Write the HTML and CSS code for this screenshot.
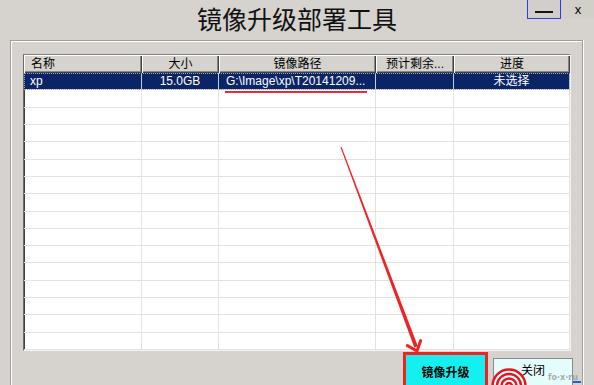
FILE: index.html
```html
<!DOCTYPE html>
<html lang="zh-CN">
<head>
  <meta charset="UTF-8">
  <meta name="viewport" content="width=device-width, initial-scale=1.0">
  <title>镜像升级部署工具</title>
  <link rel="stylesheet" href="styles.css">
</head>
<body>
  <div class="titlebar">
    <div></div>
    <h1 class="title">镜像升级部署工具</h1>
    <div class="win-controls">
      <div class="win-btn"><span class="min-bar"></span></div>
      <div class="win-btn close">x</div>
    </div>
  </div>

  <div class="group">
    <div class="listview">
      <div class="lv-head">
        <div class="hcell left">名称</div>
        <div class="hcell">大小</div>
        <div class="hcell">镜像路径</div>
        <div class="hcell">预计剩余...</div>
        <div class="hcell">进度</div>
      </div>
      <div class="lv-body">
        <div class="lv-row selected">
          <div class="cell left">xp</div>
          <div class="cell">15.0GB</div>
          <div class="cell path">G:\Image\xp\T20141209...</div>
          <div class="cell"></div>
          <div class="cell">未选择</div>
        </div>
        <div class="lv-row"><div class="cell"></div><div class="cell"></div><div class="cell"></div><div class="cell"></div><div class="cell"></div></div>
        <div class="lv-row"><div class="cell"></div><div class="cell"></div><div class="cell"></div><div class="cell"></div><div class="cell"></div></div>
        <div class="lv-row"><div class="cell"></div><div class="cell"></div><div class="cell"></div><div class="cell"></div><div class="cell"></div></div>
        <div class="lv-row"><div class="cell"></div><div class="cell"></div><div class="cell"></div><div class="cell"></div><div class="cell"></div></div>
        <div class="lv-row"><div class="cell"></div><div class="cell"></div><div class="cell"></div><div class="cell"></div><div class="cell"></div></div>
        <div class="lv-row"><div class="cell"></div><div class="cell"></div><div class="cell"></div><div class="cell"></div><div class="cell"></div></div>
        <div class="lv-row"><div class="cell"></div><div class="cell"></div><div class="cell"></div><div class="cell"></div><div class="cell"></div></div>
        <div class="lv-row"><div class="cell"></div><div class="cell"></div><div class="cell"></div><div class="cell"></div><div class="cell"></div></div>
        <div class="lv-row"><div class="cell"></div><div class="cell"></div><div class="cell"></div><div class="cell"></div><div class="cell"></div></div>
        <div class="lv-row"><div class="cell"></div><div class="cell"></div><div class="cell"></div><div class="cell"></div><div class="cell"></div></div>
        <div class="lv-row"><div class="cell"></div><div class="cell"></div><div class="cell"></div><div class="cell"></div><div class="cell"></div></div>
        <div class="lv-row"><div class="cell"></div><div class="cell"></div><div class="cell"></div><div class="cell"></div><div class="cell"></div></div>
        <div class="lv-row"><div class="cell"></div><div class="cell"></div><div class="cell"></div><div class="cell"></div><div class="cell"></div></div>
        <div class="lv-row"><div class="cell"></div><div class="cell"></div><div class="cell"></div><div class="cell"></div><div class="cell"></div></div>
        <div class="lv-row"><div class="cell"></div><div class="cell"></div><div class="cell"></div><div class="cell"></div><div class="cell"></div></div>
      </div>
    </div>

    <div class="button-row">
      <div class="highlight">
        <button class="btn upgrade">镜像升级</button>
      </div>
      <button class="btn close-btn">关闭</button>
    </div>
  </div>

  <!-- annotations drawn over the screenshot -->
  <svg class="marks" width="594" height="385" viewBox="0 0 594 385">
    <rect x="225" y="91" width="142" height="2" fill="#ee2a2a"/>
    <polygon points="340.5,147.2 341.5,146.8 417.9,346.3 414.3,347.6" fill="#ee2424"/>
    <polyline points="407.4,345.6 417,351 420.7,340.6" fill="none" stroke="#ee2424" stroke-width="3" stroke-linejoin="round" stroke-linecap="round"/>
    <g fill="none" stroke="#e8141c" stroke-width="2.4">
      <circle cx="509" cy="386" r="3"/>
      <circle cx="509" cy="386" r="7.5"/>
      <circle cx="509" cy="386" r="12"/>
      <circle cx="509" cy="386" r="16.5"/>
    </g>
    <text x="548" y="380" class="wm">fo·x·ru</text>
    <rect x="573" y="381" width="8" height="2" fill="#2a5ad8"/>
  </svg>
</body>
</html>
```

FILE: styles.css
```css
body {
  margin: 0;
  width: 594px;
  height: 385px;
  overflow: hidden;
  position: relative;
  background-color: #d6d3ce;
  font-family: "Liberation Sans", "Noto Sans CJK SC", sans-serif;
  font-size: 12px;
  color: #000;
}

.titlebar {
  height: 40px;
  display: grid;
  grid-template-columns: 1fr auto 1fr;
}

.title {
  margin: 6px 0 0;
  font-family: "Noto Sans CJK SC", sans-serif;
  font-size: 25px;
  font-weight: 400;
  line-height: 25px;
  color: #111;
}

.win-controls {
  justify-self: end;
  align-self: start;
  display: flex;
  height: 18px;
  margin-right: -1px;
  border-bottom: 1px solid #2a3cf0;
}

.win-btn {
  width: 32px;
  height: 18px;
  border-left: 1px solid #2a3cf0;
  display: flex;
  align-items: center;
  justify-content: center;
  background-color: #d2cfca;
}

.min-bar {
  width: 18px;
  height: 2px;
  margin-top: 5px;
  background-color: #111;
}

.win-btn.close {
  width: 34px;
  font-size: 13px;
  line-height: 18px;
  padding-top: 1px;
}

.group {
  box-sizing: border-box;
  margin-left: 10px;
  width: 573px;
  height: 345px;
  padding: 13px 10px 0 12px;
  border: 1px solid #a09d98;
  border-bottom: none;
  box-shadow: inset 1px 1px 0 #fff, 1px 0 0 #fff;
  overflow: hidden;
}

.listview {
  width: 546px;
  border-top: 1px solid #808080;
  border-left: 1px solid #6a6a6a;
  border-right: 1px solid #f4f4f4;
  border-bottom: 1px solid #f4f4f4;
  box-shadow: inset 1px 0 0 #404040;
  background-color: #fff;
}

.lv-head,
.lv-row {
  display: grid;
  grid-template-columns: 118px 77px 157px 78px 116px;
}

.hcell {
  height: 18px;
  line-height: 18px;
  text-align: center;
  background-color: #d6d3ce;
  box-shadow: inset 1px 1px 0 #fff, inset -1px -1px 0 #404040, inset -2px -2px 0 #8a8782;
  white-space: nowrap;
  overflow: hidden;
}

.hcell.left {
  text-align: left;
  padding-left: 7px;
}

.lv-body {
  height: 277px;
  display: grid;
  grid-template-rows: repeat(16, 1fr);
}

.lv-row {
  border-bottom: 1px solid #e4e2de;
}

.cell {
  border-right: 1px solid #e4e2de;
  text-align: center;
  line-height: 16px;
  white-space: nowrap;
  overflow: hidden;
}

.cell.left {
  text-align: left;
  padding-left: 6px;
}

.cell.path {
  text-align: left;
  padding-left: 7px;
}

.lv-row.selected {
  background-color: #0b2467;
  color: #fff;
  outline: 1px dotted #9aa6c8;
  outline-offset: -1px;
}

.lv-row.selected .cell {
  border-right-color: #c9cbd6;
}

.button-row {
  display: flex;
  justify-content: flex-end;
  align-items: flex-start;
  gap: 5px;
  margin-top: 1px;
  margin-right: -1px;
}

.highlight {
  border: 3px solid #ee2424;
}

.btn {
  box-sizing: border-box;
  font-family: "Noto Sans CJK SC", sans-serif;
  font-size: 12px;
  color: #000;
  border: 1px solid #8a8a8a;
  cursor: pointer;
  display: block;
}

.btn.upgrade {
  width: 79px;
  height: 34px;
  padding: 0;
  line-height: 14px;
  background-color: #14f0f0;
  border: none;
  font-weight: 700;
}

.btn.close-btn {
  width: 80px;
  height: 30px;
  margin-top: 6px;
  padding: 0 0 6px;
  line-height: 14px;
  background-color: #e4fcfc;
  text-align: center;
}

.marks {
  position: absolute;
  left: 0;
  top: 0;
  pointer-events: none;
}

.wm {
  font-family: "DejaVu Sans", sans-serif;
  font-size: 8px;
  font-weight: 700;
  fill: #9a9a9a;
  opacity: 0.8;
}
```
